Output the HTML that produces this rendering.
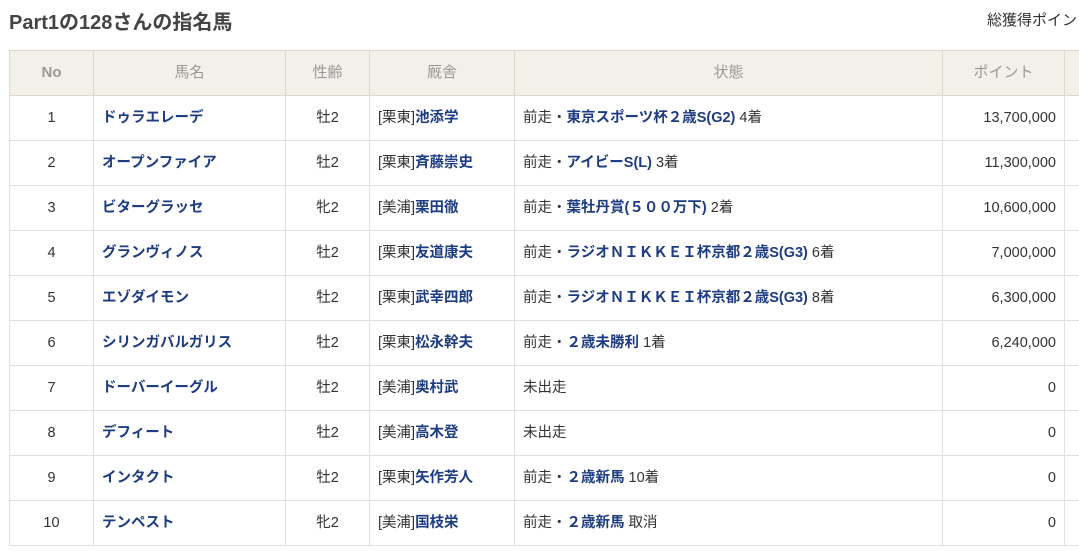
<!DOCTYPE html><html><head><meta charset="utf-8"><style>
body{margin:0;background:#fff;font-family:"Liberation Sans","Noto Sans CJK JP",sans-serif;color:#333;width:1079px;height:556px;overflow:hidden;position:relative}
h1{position:absolute;left:9px;top:9px;margin:0;font-size:20px;font-weight:bold;color:#444;line-height:28px}
.tot{position:absolute;left:987px;top:9px;font-size:15px;color:#333;white-space:nowrap}
table{position:absolute;left:9px;top:50px;border-collapse:collapse;font-size:14.5px;table-layout:fixed;width:1100px}
th{background:#f3f0e9;color:#999;font-weight:normal;padding:0;border:1px solid #ddd9cf;font-size:15px;line-height:20px;box-sizing:border-box;height:45px}
td{height:45px;box-sizing:border-box;border:1px solid #e2e0da;padding:0 8px;white-space:nowrap;line-height:20px;vertical-align:middle}
a{color:#1d3c82;font-weight:bold;text-decoration:none}
.c{text-align:center}.r{text-align:right}
</style></head><body>
<h1>Part1の128さんの指名馬</h1>
<div class="tot">総獲得ポイント</div>
<table>
<colgroup><col style="width:84px"><col style="width:192px"><col style="width:84px"><col style="width:145px"><col style="width:428px"><col style="width:122px"><col style="width:45px"></colgroup>
<tr><th style="font-weight:bold">No</th><th>馬名</th><th>性齢</th><th>厩舎</th><th>状態</th><th>ポイント</th><th></th></tr>
<tr><td class="c">1</td><td><a>ドゥラエレーデ</a></td><td class="c">牡2</td><td>[栗東]<a>池添学</a></td><td>前走・<a>東京スポーツ杯２歳S(G2)</a> 4着</td><td class="r">13,700,000</td><td></td></tr>
<tr><td class="c">2</td><td><a>オープンファイア</a></td><td class="c">牡2</td><td>[栗東]<a>斉藤崇史</a></td><td>前走・<a>アイビーS(L)</a> 3着</td><td class="r">11,300,000</td><td></td></tr>
<tr><td class="c">3</td><td><a>ビターグラッセ</a></td><td class="c">牝2</td><td>[美浦]<a>栗田徹</a></td><td>前走・<a>葉牡丹賞(５００万下)</a> 2着</td><td class="r">10,600,000</td><td></td></tr>
<tr><td class="c">4</td><td><a>グランヴィノス</a></td><td class="c">牡2</td><td>[栗東]<a>友道康夫</a></td><td>前走・<a>ラジオＮＩＫＫＥＩ杯京都２歳S(G3)</a> 6着</td><td class="r">7,000,000</td><td></td></tr>
<tr><td class="c">5</td><td><a>エゾダイモン</a></td><td class="c">牡2</td><td>[栗東]<a>武幸四郎</a></td><td>前走・<a>ラジオＮＩＫＫＥＩ杯京都２歳S(G3)</a> 8着</td><td class="r">6,300,000</td><td></td></tr>
<tr><td class="c">6</td><td><a>シリンガバルガリス</a></td><td class="c">牡2</td><td>[栗東]<a>松永幹夫</a></td><td>前走・<a>２歳未勝利</a> 1着</td><td class="r">6,240,000</td><td></td></tr>
<tr><td class="c">7</td><td><a>ドーバーイーグル</a></td><td class="c">牡2</td><td>[美浦]<a>奥村武</a></td><td>未出走</td><td class="r">0</td><td></td></tr>
<tr><td class="c">8</td><td><a>デフィート</a></td><td class="c">牡2</td><td>[美浦]<a>高木登</a></td><td>未出走</td><td class="r">0</td><td></td></tr>
<tr><td class="c">9</td><td><a>インタクト</a></td><td class="c">牡2</td><td>[栗東]<a>矢作芳人</a></td><td>前走・<a>２歳新馬</a> 10着</td><td class="r">0</td><td></td></tr>
<tr><td class="c">10</td><td><a>テンペスト</a></td><td class="c">牝2</td><td>[美浦]<a>国枝栄</a></td><td>前走・<a>２歳新馬</a> 取消</td><td class="r">0</td><td></td></tr>
</table>
</body></html>
